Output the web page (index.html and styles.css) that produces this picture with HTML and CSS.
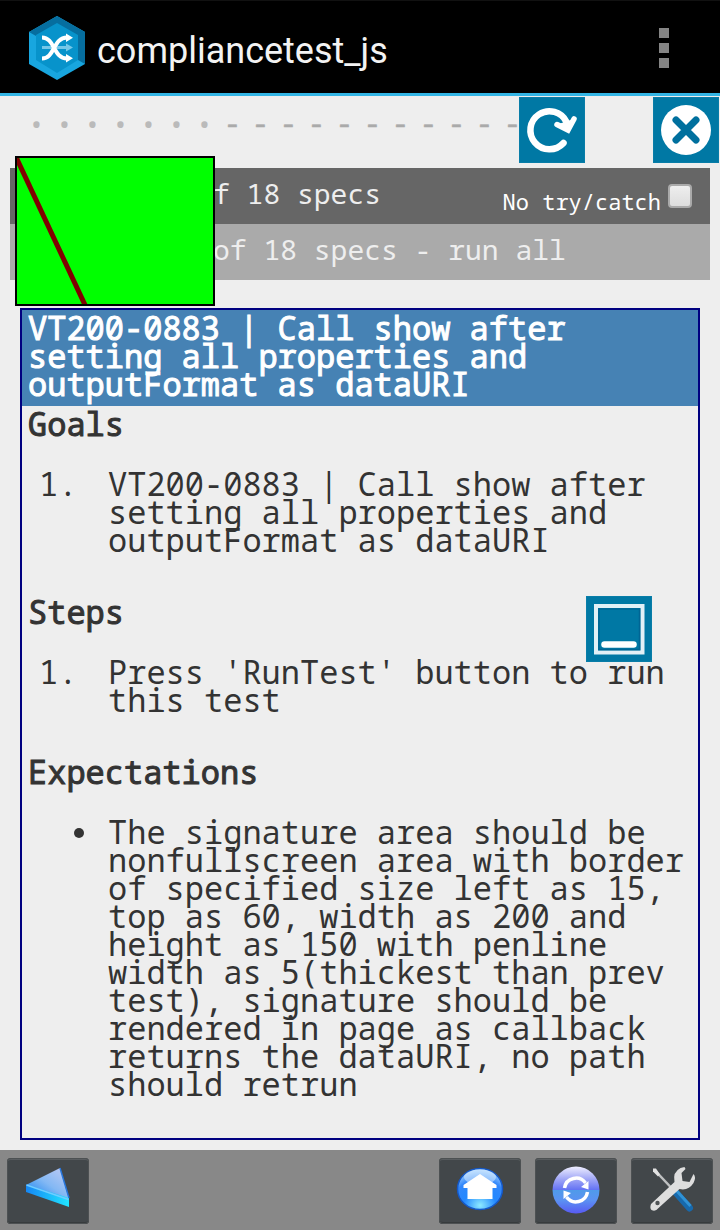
FILE: index.html
```html
<!DOCTYPE html>
<html lang="en">
<head>
<meta charset="utf-8">
<title>compliancetest_js</title>
<link rel="stylesheet" href="styles.css">
</head>
<body>
<header class="appbar">
  <svg class="logo" width="56" height="64" viewBox="0 0 56 64">
    <path d="M28 0 56 16v32L28 64 0 48V16z" fill="#18a6df"/>
    <path d="M0 16 28 0l28 16v32l-7-4V20L28 8 7 20z" fill="#066e9f"/>
    <path d="M28 7 49 19v25L28 57 7 44V19z" fill="#0793cb"/>
    <path d="M13 31.500h25" stroke="#75c7e8" stroke-width="3"/>
    <path d="m37 27.500 7 4-7 4z" fill="#75c7e8"/>
    <path d="M13 21.500c13 0 11 21 25 21M13 42.500c13 0 11-21 25-21" fill="none" stroke="#fff" stroke-width="4"/>
    <path d="m37 17.500 7 4.200-7 4.200zM37 38l7 4.200-7 4.200z" fill="#fff"/>
  </svg>
  <h1 class="app-title">compliancetest_js</h1>
  <div class="overflow"><i></i><i></i><i></i></div>
</header>
<main class="page">
  <div class="symbols">
    <span class="dot">•</span><span class="dot">•</span><span class="dot">•</span><span class="dot">•</span><span class="dot">•</span><span class="dot">•</span><span class="dot">•</span><span class="dash">-</span><span class="dash">-</span><span class="dash">-</span><span class="dash">-</span><span class="dash">-</span><span class="dash">-</span><span class="dash">-</span><span class="dash">-</span><span class="dash">-</span><span class="dash">-</span><span class="dash">-</span>
  </div>
  <div class="bar bar-dark">
    <span class="ran">f 18 specs</span>
    <label class="trycatch">No try/catch<span class="check"></span></label>
  </div>
  <div class="bar bar-light"><span>of 18 specs - run all</span></div>
  <article class="spec">
    <h2 class="spec-title">VT200-0883 | Call show after<br>setting all properties and<br>outputFormat as dataURI</h2>
    <section class="part">
      <h3>Goals</h3>
      <div class="item"><span class="num">1.</span><p>VT200-0883 | Call show after<br>setting all properties and<br>outputFormat as dataURI</p></div>
    </section>
    <section class="part">
      <h3>Steps</h3>
      <div class="item"><span class="num">1.</span><p>Press 'RunTest' button to run<br>this test</p></div>
    </section>
    <section class="part">
      <h3>Expectations</h3>
      <div class="item"><span class="bullet"><i></i></span><p>The signature area should be<br>nonfullscreen area with border<br>of specified size left as 15,<br>top as 60, width as 200 and<br>height as 150 with penline<br>width as 5(thickest than prev<br>test), signature should be<br>rendered in page as callback<br>returns the dataURI, no path<br>should retrun</p></div>
    </section>
  </article>
</main>
<svg class="signature" width="200" height="150" viewBox="0 0 200 150">
  <path d="M0 0h200v150H0z" fill="#0f0"/>
  <path d="m1 1 69.500 149" stroke="#800000" stroke-width="5"/>
  <path d="M1 1h198v148H1z" fill="none" stroke="#000" stroke-width="2"/>
</svg>
<svg class="tool tool-refresh" viewBox="0 0 66 66">
  <path d="M44.500 46A19 19 0 1 1 47.500 25" fill="none" stroke="#fff" stroke-width="6.500" stroke-linecap="round"/>
  <path d="m38 27.500 11 5.500L55 22" fill="#fff" stroke="#fff" stroke-width="5.500" stroke-linecap="round"/>
</svg>
<svg class="tool tool-close" viewBox="0 0 66 66">
  <circle cx="33" cy="33" r="25" fill="#fff"/>
  <path d="m23 23 20 20M43 23 23 43" stroke="#00709e" stroke-width="7" stroke-linecap="round"/>
</svg>
<svg class="tool tool-min" viewBox="0 0 66 66">
  <path d="M10 10h46.500v46.500H10z" fill="none" stroke="#e2f0f6" stroke-width="4"/>
  <path d="M13 13h40.500v40.500H13z" fill="none" stroke="#006594" stroke-width="1.500"/>
  <path d="M18.500 48.500h29" stroke="#fff" stroke-width="6.500" stroke-linecap="round"/>
</svg>
<footer class="toolbar">
  <div class="tbtn back">
    <svg viewBox="0 0 81 66">
      <defs><linearGradient id="a" x1="1" y1="0" x2="0" y2="1"><stop offset="0" stop-color="#c4ccf4"/><stop offset=".5" stop-color="#83b8f4"/><stop offset="1" stop-color="#087df0"/></linearGradient>
      <linearGradient id="b"><stop offset="0" stop-color="#1687f5"/><stop offset="1" stop-color="#20e5ff"/></linearGradient></defs>
      <path d="m18.500 27 34-17 9 31z" fill="url(#a)"/>
      <path d="m18.500 26.500 43 13.500v9L18.500 34z" fill="url(#b)"/>
      <path d="m19 27 42 14.500" stroke="#70ccff" stroke-width="1.500"/>
      <path d="m52.500 10 9 30" stroke="#2776dc" stroke-width="1.500"/>
    </svg>
  </div>
  <div class="tbtn">
    <svg viewBox="0 0 81 66">
      <defs><radialGradient id="c" cx=".5" cy=".9" r=".9"><stop offset="0" stop-color="#8deaff"/><stop offset=".4" stop-color="#2388ff"/><stop offset=".7" stop-color="#3187fb"/><stop offset="1" stop-color="#b4ddff"/></radialGradient></defs>
      <ellipse cx="40.500" cy="31" rx="22.500" ry="20.500" fill="url(#c)" stroke="#1458c8" stroke-width="1.500"/>
      <ellipse cx="40.500" cy="19" rx="16" ry="7.500" fill="#dceeff" opacity=".55"/>
      <path d="M40.500 16 57 27v3h-4v11H28V30h-4v-3z" fill="#fff"/>
    </svg>
  </div>
  <div class="tbtn">
    <svg viewBox="0 0 81 66">
      <defs><linearGradient id="d" x2="0" y2="1"><stop offset="0" stop-color="#eef"/><stop offset=".28" stop-color="#9da4f6"/><stop offset=".49" stop-color="#6674f4"/><stop offset=".5" stop-color="#4f9be9"/><stop offset=".72" stop-color="#5b91f2"/><stop offset="1" stop-color="#585af3"/></linearGradient></defs>
      <circle cx="40.500" cy="32" r="23.500" fill="url(#d)"/>
      <path d="M29 30a11.700 11.700 0 0 1 21-5M52 34a11.700 11.700 0 0 1-21 5" fill="none" stroke="#fff" stroke-width="3.500"/>
      <path d="m45.500 29 7.500-6v8.500zM35.500 35l-7.500 6v-8.500z" fill="#fff"/>
    </svg>
  </div>
  <div class="tbtn">
    <svg viewBox="0 0 81 66">
      <path d="m24 13 16 17" stroke="#bfc1c2" stroke-width="2.500"/>
      <path d="m21.500 10.500 3 0 4 6-2 2-5-5z" fill="#e2e2e2"/>
      <path d="m43 33 15 17" stroke="#1769ac" stroke-width="7" stroke-linecap="round"/>
      <path d="m43.500 31 15.500 17" stroke="#2f92d6" stroke-width="3"/>
      <path d="M19.500 46 43 24q-2-10 6-14l4-1 1 2-4 4 1 8 7 1 4-8q3 3 0 9-5 8-14 6L27 50q-3 4-7 2-2-2-.500-6z" fill="#dedede"/>
      <circle cx="26" cy="45" r="2.200" fill="#505456"/>
    </svg>
  </div>
</footer>
</body>
</html>
```
FILE: styles.css
```css
* { box-sizing: border-box; }
body {
  margin: 0; width: 720px; height: 1230px; position: relative; overflow: hidden;
  display: flex; flex-direction: column; background: #eee; color: #333;
  font-family: "Droid Sans Mono", "Noto Sans Mono", "DejaVu Sans Mono", monospace;
}
h1, h2, h3, p { margin: 0; font-weight: 400; }
.appbar {
  height: 96px; flex: none; display: flex; align-items: center;
  background: #000; border-top: 1px solid #111; border-bottom: 3px solid #33b5e5;
  padding: 2px 51px 0 28.500px;
}
.logo { display: block; flex: none; }
.app-title {
  margin-left: 12.500px; flex: 1; color: #f3f3f3; white-space: nowrap;
  font: 36px/44px Roboto, sans-serif; padding-top: 5px;
}
.overflow { display: flex; flex-direction: column; gap: 5px; }
.overflow i { width: 10px; height: 10px; background: #858585; }
.page { flex: 1; padding: 0 10px; }
.symbols { height: 72px; padding: 12px 0 0 12.500px; display: flex; }
.symbols span { width: 28px; flex: none; text-align: center; line-height: 28px; }
.symbols .dot { font-size: 28px; color: #bababa; padding-top: 2px; }
.dash { font-size: 28px; color: #aaa; -webkit-text-stroke: .5px #aaa; }
.bar {
  height: 56px; display: flex; align-items: center; color: #eee; white-space: nowrap;
  font-size: 28px; line-height: 50px;
}
.bar-dark { background: #666; padding: 0 18px 6px 203px; justify-content: space-between; }
.bar-light { background: #aaa; padding: 0 0 6px 203px; }
.trycatch {
  display: flex; align-items: center; gap: 7px; color: #fff;
  font-size: 22px; padding-top: 16px;
}
.check {
  width: 24px; height: 24px; margin-top: -11px; border: 2px solid #aaa; border-radius: 4px;
  background: linear-gradient(#eee, #ddd);
}
.spec {
  margin: 28px 10px 0; border: 2px solid #000080; height: 832px;
  font-size: 32px; line-height: 28px; white-space: nowrap;
}
.spec-title { background: #4682b4; color: #fff; padding: 4px 6px 8px; }
.spec-title, .part h3 { font-size: inherit; -webkit-text-stroke: 1px currentColor; }
.part { padding: 4px 6px 40px; }
.item { display: flex; margin-top: 32px; }
.num, .bullet { width: 80px; flex: none; padding-left: 11px; }
.bullet { height: 28px; display: flex; align-items: center; padding: 1px 0 0 46px; }
.bullet i { width: 10px; height: 10px; border-radius: 50%; background: #333; }
.signature { position: absolute; left: 15px; top: 156px; }
.tool {
  position: absolute; width: 66px; height: 66px; background: #0078a4;
  box-shadow: inset 0 0 0 1px #087da8;
}
.tool-refresh { left: 519px; top: 97px; }
.tool-close { left: 653px; top: 97px; }
.tool-min { left: 586px; top: 596px; }
.toolbar {
  height: 80px; flex: none; display: flex; gap: 14px; background: #888;
  padding: 8px 7px 6px;
}
.tbtn {
  width: 82px; height: 66px; border-radius: 4px; background: #42474a;
  box-shadow: inset 0 0 0 1px #4d5153, inset 0 2px 0 #595d60, inset 0 -2px 0 #373b3d;
}
.tbtn svg { display: block; width: 82px; height: 66px; }
.back { margin-right: auto; }
```
